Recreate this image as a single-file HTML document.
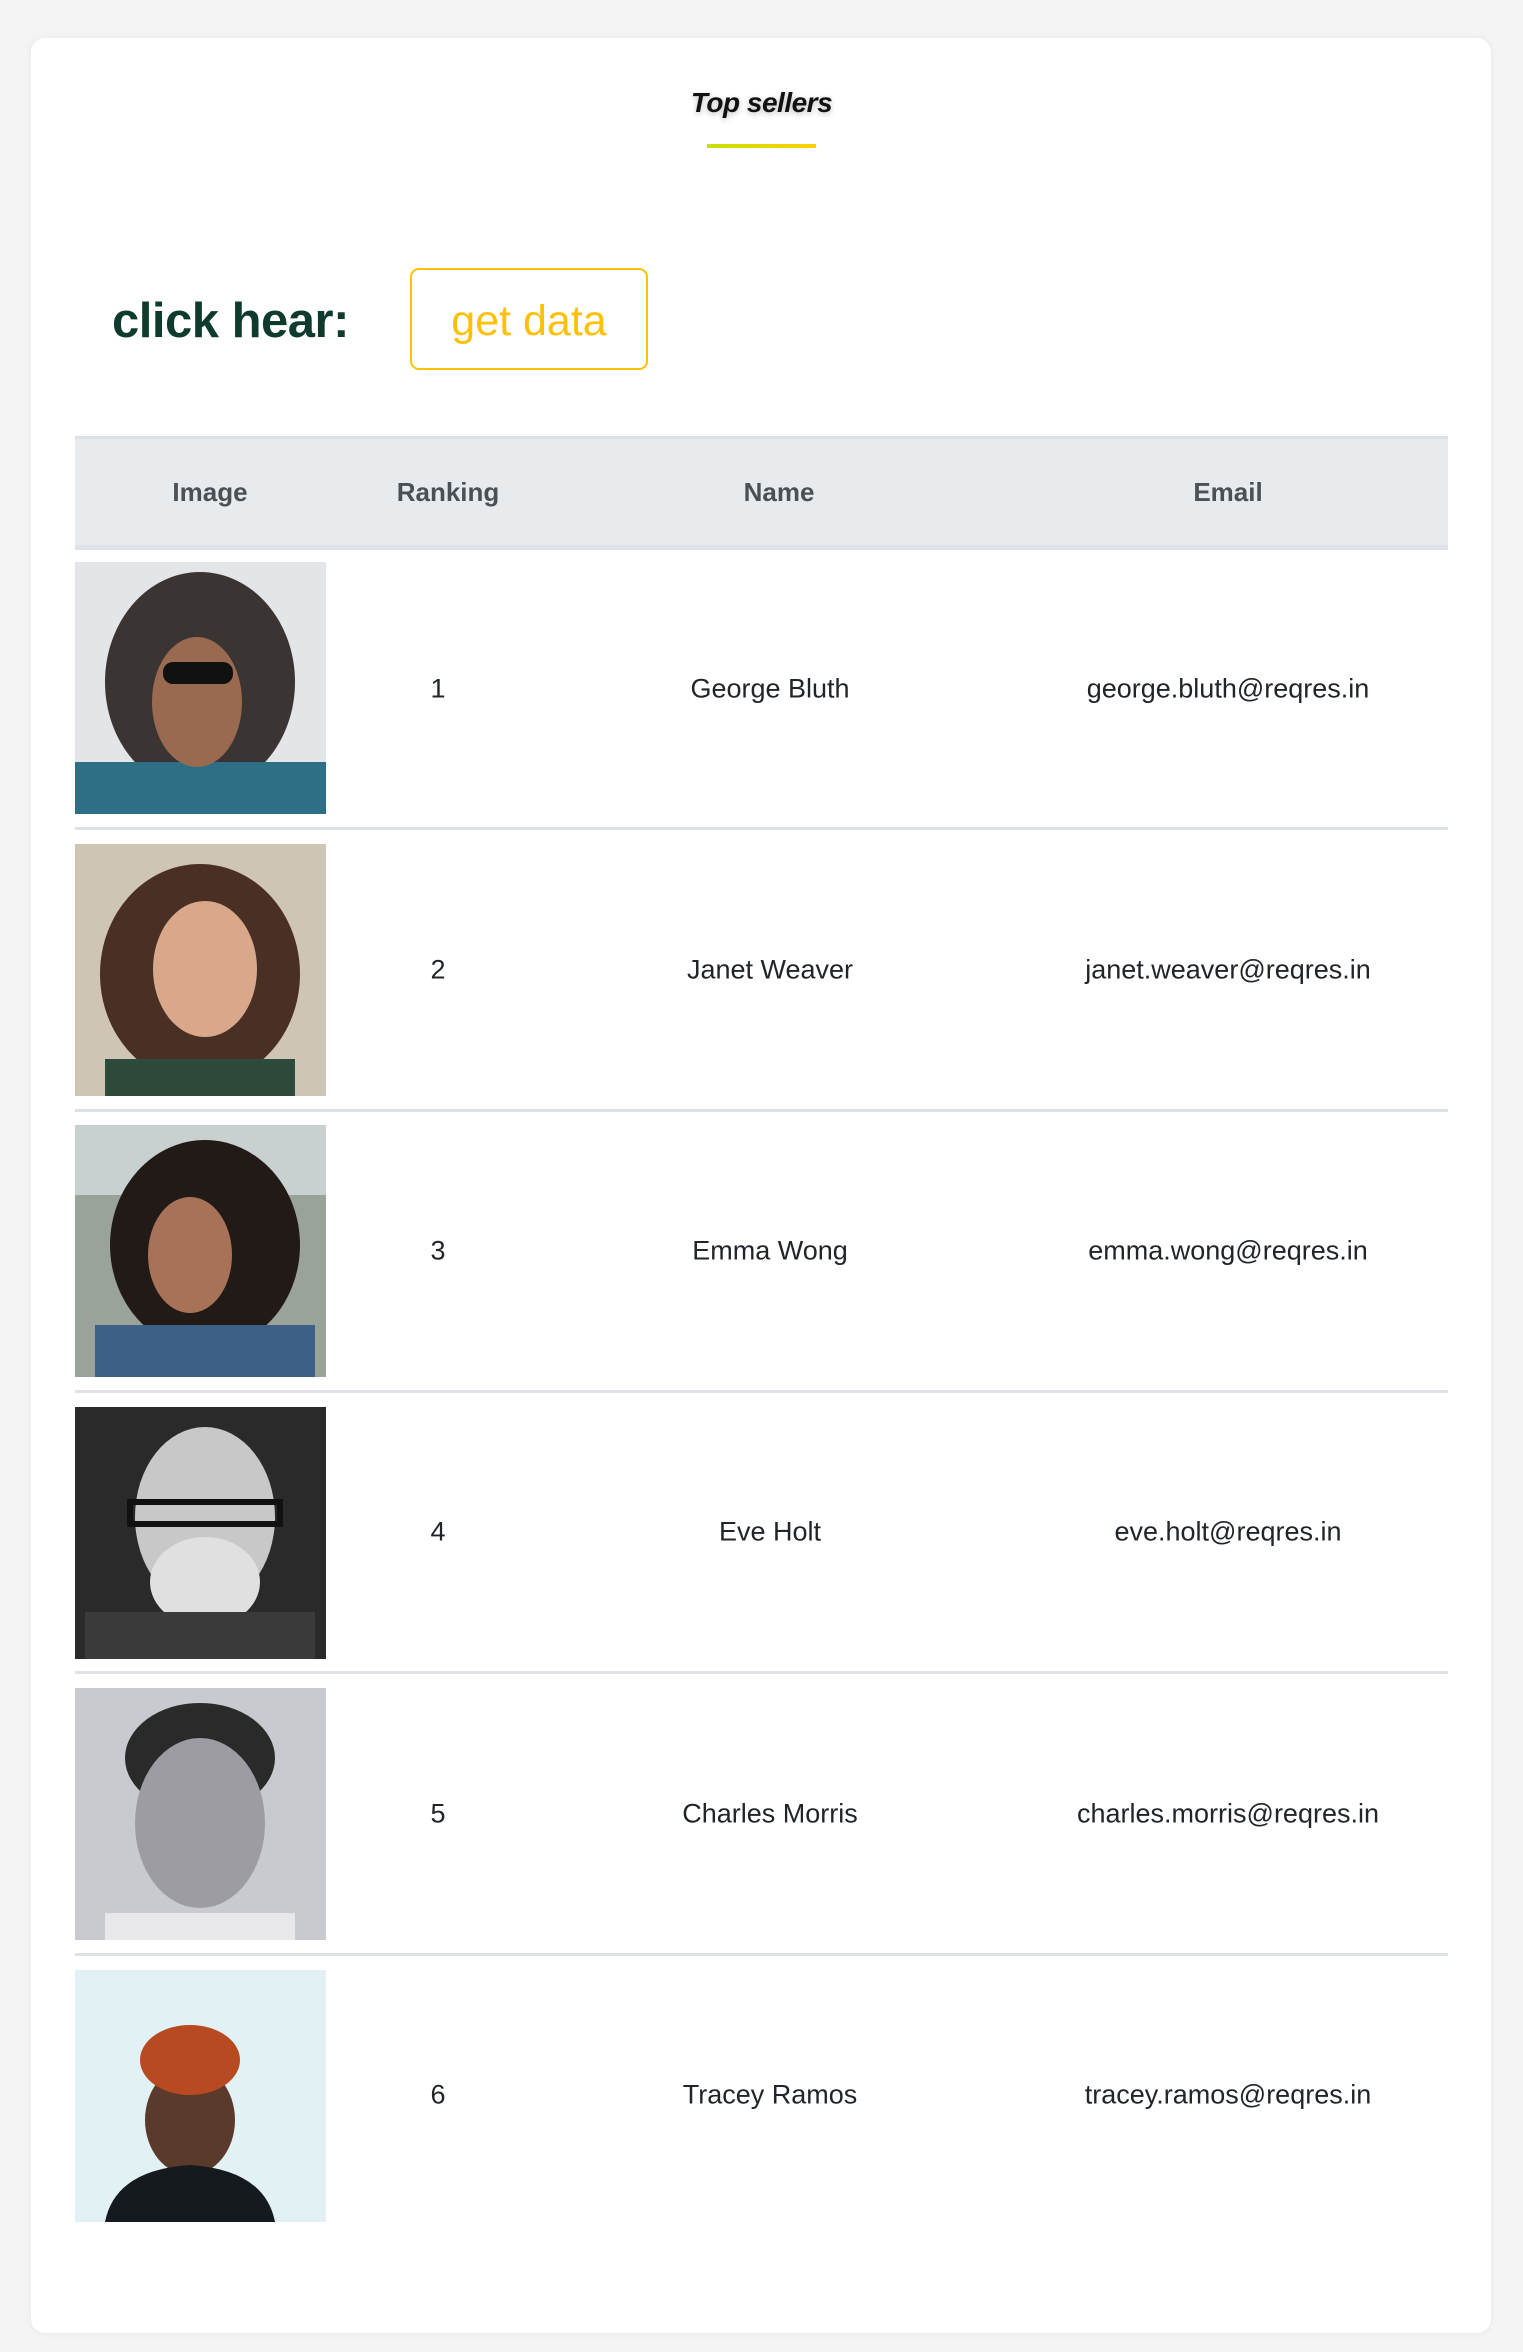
<!DOCTYPE html>
<html><head><meta charset="utf-8"><style>
body{margin:0;width:1523px;height:2352px;background:#f4f4f4;font-family:"Liberation Sans",sans-serif;position:relative;overflow:hidden}
.card{position:absolute;left:31px;top:38px;width:1460px;height:2295px;background:#fff;border-radius:14px;box-shadow:0 0 8px rgba(0,0,0,.06)}
.a{position:absolute}
.title{left:0;width:1523px;top:87px;text-align:center;font-size:28px;font-style:italic;font-weight:bold;color:#111;text-shadow:0 2px 6px rgba(0,0,0,.25);letter-spacing:-0.5px}
.ul{left:707px;top:144px;width:109px;height:4px;background:linear-gradient(90deg,#c8e000,#ffd000)}
.click{left:112px;top:293px;font-size:49px;font-weight:bold;color:#0e3b2d;letter-spacing:-0.5px}
.btn{left:410px;top:268px;width:234px;height:98px;border:2px solid #ffc107;border-radius:9px;color:#ffc107;font-size:43px;text-align:center;line-height:102px}
.head{left:75px;top:436px;width:1373px;height:106px;background:#e8ebee;border-top:3px solid #dee2e6;border-bottom:5px solid #dee2e6}
.h{top:477px;font-size:26px;font-weight:bold;color:#4b5057;transform:translateX(-50%)}
.t{font-size:27px;color:#212529;transform:translate(-50%,-50%);white-space:nowrap}
.sep{left:75px;width:1373px;height:3px;background:#dee2e6}
svg.img{position:absolute;left:75px;width:251px;height:252px}
</style></head><body>
<div class="card"></div>
<div class="a title">Top sellers</div>
<div class="a ul"></div>
<div class="a click">click hear:</div>
<div class="a btn">get data</div>
<div class="a head"></div>
<div class="a h" style="left:210px">Image</div>
<div class="a h" style="left:448px">Ranking</div>
<div class="a h" style="left:779px">Name</div>
<div class="a h" style="left:1228px">Email</div>

<svg class="img" style="top:562px" viewBox="0 0 251 252"><rect width="251" height="252" fill="#e3e5e8"/><ellipse cx="125" cy="120" rx="95" ry="110" fill="#3a3532"/><rect x="0" y="200" width="251" height="52" fill="#2f6f85"/><ellipse cx="122" cy="140" rx="45" ry="65" fill="#9a6a50"/><rect x="88" y="100" width="70" height="22" rx="10" fill="#111"/></svg>
<div class="a t" style="left:438px;top:689px">1</div>
<div class="a t" style="left:770px;top:689px">George Bluth</div>
<div class="a t" style="left:1228px;top:689px">george.bluth@reqres.in</div>
<div class="a sep" style="top:827px"></div>

<svg class="img" style="top:844px" viewBox="0 0 251 252"><rect width="251" height="252" fill="#cfc5b5"/><ellipse cx="125" cy="130" rx="100" ry="110" fill="#4a3024"/><ellipse cx="130" cy="125" rx="52" ry="68" fill="#d9a88a"/><rect x="30" y="215" width="190" height="37" fill="#2e4a3a"/></svg>
<div class="a t" style="left:438px;top:970px">2</div>
<div class="a t" style="left:770px;top:970px">Janet Weaver</div>
<div class="a t" style="left:1228px;top:970px">janet.weaver@reqres.in</div>
<div class="a sep" style="top:1109px"></div>

<svg class="img" style="top:1125px" viewBox="0 0 251 252"><rect width="251" height="252" fill="#9aa39a"/><rect width="251" height="70" fill="#c8d0d0"/><ellipse cx="130" cy="120" rx="95" ry="105" fill="#221a17"/><ellipse cx="115" cy="130" rx="42" ry="58" fill="#a87258"/><rect x="20" y="200" width="220" height="52" fill="#3e5f86"/></svg>
<div class="a t" style="left:438px;top:1251px">3</div>
<div class="a t" style="left:770px;top:1251px">Emma Wong</div>
<div class="a t" style="left:1228px;top:1251px">emma.wong@reqres.in</div>
<div class="a sep" style="top:1390px"></div>

<svg class="img" style="top:1407px" viewBox="0 0 251 252"><rect width="251" height="252" fill="#2a2a2a"/><ellipse cx="130" cy="110" rx="70" ry="90" fill="#c8c8c8"/><ellipse cx="130" cy="175" rx="55" ry="45" fill="#e0e0e0"/><rect x="55" y="95" width="150" height="22" fill="none" stroke="#111" stroke-width="6"/><rect x="10" y="205" width="230" height="47" fill="#3a3a3a"/></svg>
<div class="a t" style="left:438px;top:1532px">4</div>
<div class="a t" style="left:770px;top:1532px">Eve Holt</div>
<div class="a t" style="left:1228px;top:1532px">eve.holt@reqres.in</div>
<div class="a sep" style="top:1671px"></div>

<svg class="img" style="top:1688px" viewBox="0 0 251 252"><rect width="251" height="252" fill="#c9cacf"/><ellipse cx="125" cy="70" rx="75" ry="55" fill="#2a2a2a"/><ellipse cx="125" cy="135" rx="65" ry="85" fill="#9c9ca2"/><rect x="30" y="225" width="190" height="27" fill="#e8e8ea"/></svg>
<div class="a t" style="left:438px;top:1814px">5</div>
<div class="a t" style="left:770px;top:1814px">Charles Morris</div>
<div class="a t" style="left:1228px;top:1814px">charles.morris@reqres.in</div>
<div class="a sep" style="top:1953px"></div>

<svg class="img" style="top:1970px" viewBox="0 0 251 252"><rect width="251" height="252" fill="#e2f1f3"/><ellipse cx="115" cy="150" rx="45" ry="55" fill="#5a3a2a"/><ellipse cx="115" cy="90" rx="50" ry="35" fill="#b84a22"/><path d="M30 252 Q40 200 115 195 Q190 200 200 252Z" fill="#151a1e"/></svg>
<div class="a t" style="left:438px;top:2095px">6</div>
<div class="a t" style="left:770px;top:2095px">Tracey Ramos</div>
<div class="a t" style="left:1228px;top:2095px">tracey.ramos@reqres.in</div>
</body></html>
